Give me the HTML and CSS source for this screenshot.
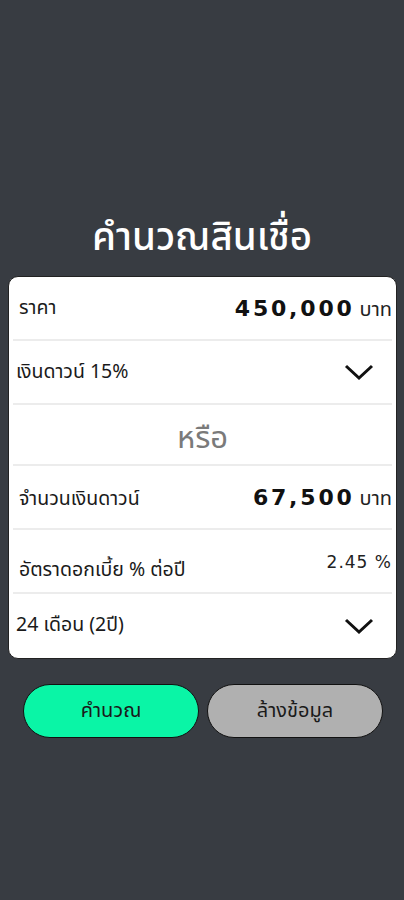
FILE: index.html
```html
<!DOCTYPE html>
<html lang="th">
<head>
<meta charset="utf-8">
<link rel="stylesheet" href="styles.css">
</head>
<body>
<div class="screen">
  <h1 class="title">คำนวณสินเชื่อ</h1>
  <div class="card">
    <div class="row">
      <span class="label">ราคา</span>
      <span class="value"><b class="num">450,000</b><span class="unit">บาท</span></span>
    </div>
    <div class="row">
      <span class="label select">เงินดาวน์ 15%</span>
      <svg class="chev" width="30" height="18" viewBox="0 0 30 18"><path d="M2 3 L15 15 L28 3" fill="none" stroke="#111" stroke-width="3"/></svg>
    </div>
    <div class="row or">หรือ</div>
    <div class="row">
      <span class="label low">จำนวนเงินดาวน์</span>
      <span class="value"><b class="num">67,500</b><span class="unit">บาท</span></span>
    </div>
    <div class="row">
      <span class="label lower">อัตราดอกเบี้ย % ต่อปี</span>
      <span class="rate">2.45 %</span>
    </div>
    <div class="row last">
      <span class="label select up">24 เดือน (2ปี)</span>
      <svg class="chev" width="30" height="18" viewBox="0 0 30 18"><path d="M2 3 L15 15 L28 3" fill="none" stroke="#111" stroke-width="3"/></svg>
    </div>
  </div>
  <div class="buttons">
    <button class="btn calc">คำนวณ</button>
    <button class="btn clear">ล้างข้อมูล</button>
  </div>
</div>
</body>
</html>
```
FILE: styles.css
```css
html, body {
  margin: 0;
  padding: 0;
  background: #383c42;
}
body {
  font-family: "Noto Sans Thai", "Noto Sans Thai UI", Tahoma, "DejaVu Sans", sans-serif;
  color: #111;
}
.screen {
  width: 404px;
  height: 900px;
  padding-top: 212px;
  box-sizing: border-box;
}
.title {
  margin: 0 0 12px;
  text-align: center;
  color: #fff;
  font-size: 38.5px;
  font-weight: 500;
  line-height: 52px;
}
.card {
  margin: 0 7px 0 8px;
  background: #fff;
  border-radius: 10px;
  border: 1px solid #222;
  padding: 0 4px;
  overflow: hidden;
}
.row {
  height: 62px;
  display: flex;
  align-items: center;
  justify-content: space-between;
  border-bottom: 2px solid #ececec;
  padding: 0 0 0 6px;
}
.row.last {
  border-bottom: none;
  height: 64px;
}
.label {
  font-size: 19.5px;
  color: #1a1a1a;
  padding-bottom: 1px;
}
.label.select {
  margin-left: -3px;
}
.label.up {
  padding-bottom: 3px;
}
.label.low {
  padding-top: 8px;
  padding-bottom: 4px;
}
.label.lower {
  padding-top: 22px;
  padding-bottom: 4px;
}
.value {
  display: flex;
  align-items: baseline;
  gap: 5px;
  padding-top: 4px;
}
.num {
  font-family: "DejaVu Sans", sans-serif;
  font-weight: bold;
  font-size: 22px;
  letter-spacing: 2.8px;
  color: #111;
}
.unit {
  font-size: 20px;
  color: #222;
}
.chev {
  margin-right: 18px;
}
.or {
  justify-content: center;
  font-size: 31px;
  color: #7a7a7a;
  padding: 8px 0 0;
  box-sizing: border-box;
  height: 61px;
}
.rate {
  font-family: "DejaVu Sans", sans-serif;
  font-size: 17px;
  letter-spacing: 1px;
  align-self: flex-start;
  margin-top: 22px;
  color: #222;
}
.buttons {
  display: flex;
  gap: 8px;
  padding: 25px 21px 0 23px;
}
.btn {
  flex: 1;
  height: 54px;
  border-radius: 27px;
  border: 1px solid #111;
  font-family: inherit;
  font-size: 20px;
  color: #1a1a1a;
}
.calc {
  background: #0af5a6;
}
.clear {
  background: #b0b0b0;
}
```
